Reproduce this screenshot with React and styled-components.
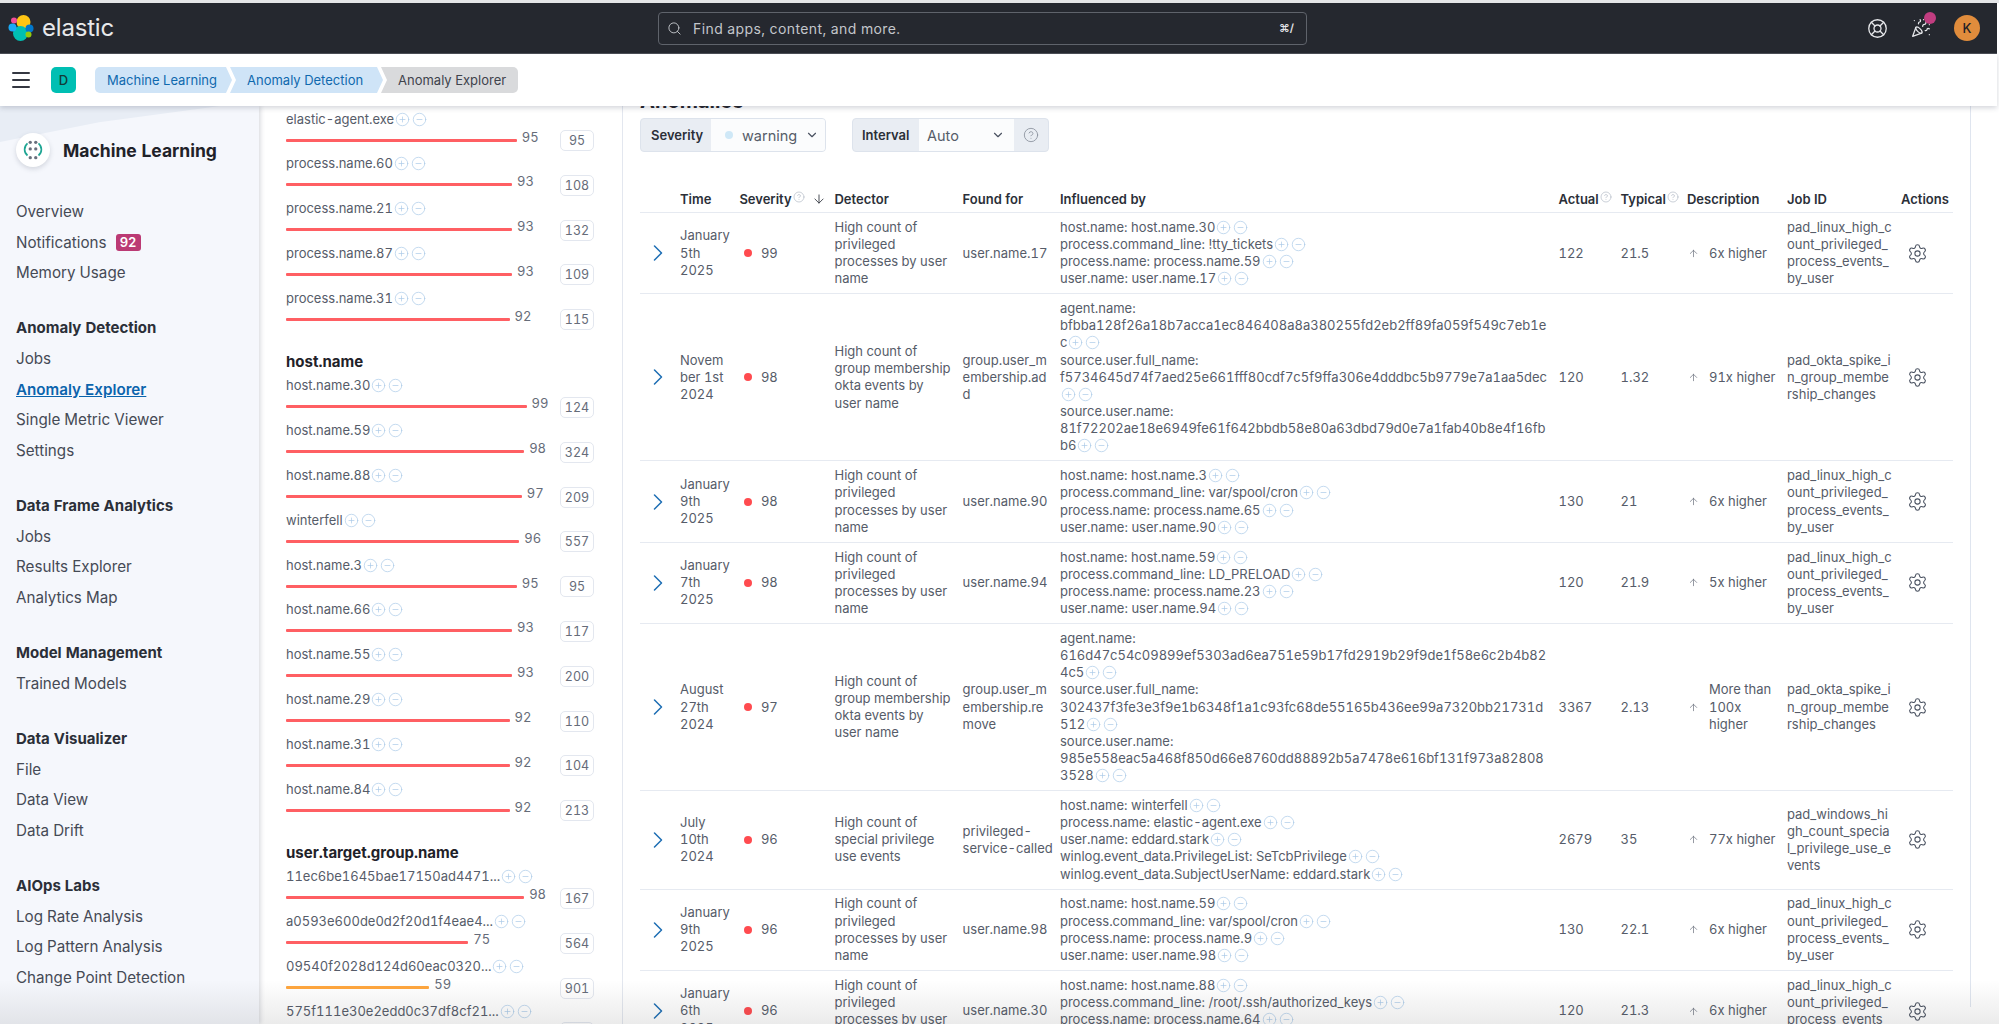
import React from 'react'
import styled, { createGlobalStyle } from 'styled-components'
import {
    ArrowDown,
    ArrowUp,
    ChevronDown,
    ChevronRight,
    CircleHelp,
    CircleMinus,
    CirclePlus,
    LifeBuoy,
    Menu,
    PartyPopper,
    Search,
    Settings,
} from 'lucide-react'

const GlobalStyle = createGlobalStyle`
    html, body {
        margin: 0;
        height: 100%;
        overflow: hidden;
        background: #fff;
    }
    * {
        box-sizing: border-box;
    }
    body {
        font-family: Inter, "Liberation Sans", sans-serif;
        font-size: 13px;
        font-variant-numeric: tabular-nums;
        color: #4a5261;
    }
`

const Page = styled.div`
    position: relative;
    height: 1024px;
    display: flex;
    flex-direction: column;
    overflow: hidden;
    border-top: 3px solid #e4e5e7;
`

const TopBar = styled.header`
    flex: 0 0 51px;
    width: 1997px;
    background: #25282f;
    border-bottom: 1px solid #4b4e55;
    display: flex;
    align-items: center;
    position: relative;
`

const Brand = styled.div`
    width: 658px;
    padding-left: 8px;
    display: flex;
    align-items: center;
    gap: 8px;
    color: #e8e9eb;
    font-size: 24px;
    line-height: 26px;
    letter-spacing: -.2px;
`

const SearchBox = styled.div`
    width: 649px;
    height: 33px;
    border: 1px solid #5f636b;
    border-radius: 4px;
    display: flex;
    align-items: center;
    padding: 0 12px 0 8px;
    color: #c3c6cb;
    font-size: 14px;
`

const SearchText = styled.span`
    margin-left: 11px;
    flex-grow: 1;
    letter-spacing: .4px;
`

const Shortcut = styled.span`
    font-size: 11px;
    font-weight: 600;
    color: #e3e4e7;
`

const TopIcons = styled.div`
    margin-left: auto;
    padding-right: 17px;
    display: flex;
    align-items: center;
    color: #e6e7ea;
`

const TopIcon = styled.span`
    position: relative;
    display: flex;
    margin-right: ${(props) => props.gap}px;
`

const AlertDot = styled.span`
    position: absolute;
    top: -6px;
    right: -5px;
    width: 12px;
    height: 12px;
    border-radius: 50%;
    background: #c13d80;
`

const Avatar = styled.span`
    width: 26px;
    height: 26px;
    border-radius: 50%;
    background: #e08c3c;
    color: #1f2126;
    font-size: 13px;
    font-weight: 500;
    display: flex;
    align-items: center;
    justify-content: center;
`

const NavBar = styled.nav`
    flex: 0 0 52px;
    width: 1997px;
    background: #fff;
    display: flex;
    align-items: center;
    padding-left: 9px;
    box-shadow: 0 2px 5px rgba(60, 70, 90, .22);
    position: relative;
    z-index: 2;
    color: #343741;
`

const SpaceBadge = styled.span`
    width: 25px;
    height: 26px;
    margin-left: 18px;
    margin-right: 19px;
    border-radius: 5px;
    background: #00bfb3;
    color: #123b38;
    font-size: 13px;
    font-weight: 500;
    display: flex;
    align-items: center;
    justify-content: center;
`

const Crumbs = styled.div`
    display: flex;
    height: 26px;
`

const Crumb = styled.span`
    width: ${(props) => props.width}px;
    margin-left: ${(props) => (props.first ? 0 : -2)}px;
    padding-left: ${(props) => (props.first ? 12 : 17)}px;
    background: ${(props) => (props.current ? '#d9dadc' : '#cfe4f7')};
    color: ${(props) => (props.current ? '#3f434c' : '#0f69ae')};
    font-size: 13px;
    line-height: 26px;
    white-space: nowrap;
    border-radius: ${(props) => (props.first ? '5px 0 0 5px' : props.current ? '0 5px 5px 0' : '0')};
    clip-path: ${(props) =>
        props.first
            ? 'polygon(0 0, calc(100% - 6px) 0, 100% 50%, calc(100% - 6px) 100%, 0 100%)'
            : props.current
            ? 'polygon(0 0, 100% 0, 100% 100%, 0 100%, 6px 50%)'
            : 'polygon(0 0, calc(100% - 6px) 0, 100% 50%, calc(100% - 6px) 100%, 0 100%, 6px 50%)'};
`

const Body = styled.div`
    flex: 1;
    min-height: 0;
    display: flex;
    overflow: hidden;
`

const Sidebar = styled.aside`
    flex: 0 0 259px;
    background: #f5f7fc;
    padding: 27px 0 0 16px;
    position: relative;
    box-shadow: 2px 0 4px rgba(70, 80, 100, .18);
    z-index: 1;

    &::before {
        content: '';
        position: absolute;
        left: 0;
        top: 0;
        width: 220px;
        height: 36px;
        background: #e8edf5;
        clip-path: polygon(0 0, 100% 0, 45% 45%, 0 100%);
    }
`

const SideTitle = styled.div`
    display: flex;
    align-items: center;
    gap: 13px;
    margin-bottom: 30px;
    color: #1f2229;
    font-size: 17.5px;
    font-weight: 700;
    position: relative;
`

const LogoCircle = styled.span`
    width: 34px;
    height: 34px;
    border-radius: 50%;
    background: #fff;
    box-shadow: 0 2px 5px rgba(70, 80, 100, .2);
    display: flex;
    align-items: center;
    justify-content: center;
`

const SideGroup = styled.div`
    margin-bottom: 23.6px;
`

const SideHeading = styled.div`
    height: 32px;
    line-height: 32px;
    color: #2b2f38;
    font-size: 15px;
    font-weight: 700;
`

const SideItem = styled.div`
    height: 30.5px;
    line-height: 30.5px;
    font-size: 15.2px;
    color: ${(props) => (props.active ? '#0b64ad' : '#454a55')};
    font-weight: ${(props) => (props.active ? 600 : 400)};
    text-decoration: ${(props) => (props.active ? 'underline' : 'none')};
    display: flex;
    align-items: center;
    gap: 9px;
`

const CountBadge = styled.span`
    width: 25px;
    height: 17px;
    border-radius: 3px;
    background: #bb3a74;
    color: #fff;
    font-size: 13px;
    font-weight: 600;
    line-height: 17px;
    text-align: center;
`

const InfluencerPanel = styled.section`
    flex: 0 0 364px;
    background: #fff;
    padding: 4.5px 0 0 27px;
    border-right: 1px solid #e3e7ef;
`

const InfluencerGroup = styled.div`
    margin-bottom: 17px;
`

const GroupTitle = styled.div`
    height: 21px;
    margin-bottom: 5px;
    line-height: 21px;
    color: #1f2229;
    font-size: 15px;
    font-weight: 700;
`

const InfluencerRow = styled.div`
    width: 308px;
    height: 44.8px;
    display: grid;
    grid-template-columns: 274px 34px;
    grid-template-rows: 17px 27.8px;
`

const InfluencerName = styled.div`
    grid-column: 1 / 3;
    line-height: 17px;
    white-space: nowrap;
    display: flex;
    align-items: center;
    color: #565c69;
`

const NameText = styled.span`
    min-width: ${(props) => (props.truncated ? 197 : 0)}px;
`

const BarLine = styled.div`
    display: flex;
    align-items: flex-start;
    gap: 5px;
`

const ScoreBar = styled.span`
    display: block;
    height: 3px;
    margin-top: 11px;
    border-radius: 1px;
    background: ${(props) => (props.score < 60 ? '#ffa63d' : '#ff5f63')};
`

const ScoreValue = styled.span`
    font-size: 13px;
    line-height: 19px;
    color: #666c79;
`

const CountBox = styled.span`
    height: 21px;
    margin-top: 2.5px;
    border: 1px solid #e3e7ef;
    border-radius: 5px;
    color: #666c79;
    font-size: 12.5px;
    line-height: 19px;
    text-align: center;
`

const FilterIcons = styled.span`
    display: inline-flex;
    vertical-align: -3px;
    gap: 2px;
    margin-left: 1px;
    color: #a9c9e8;
`

const Main = styled.main`
    flex: 1;
    min-width: 0;
    background: #fff;
    position: relative;
    padding-left: 17px;
`

const ContentColumn = styled.div`
    width: 1331px;
    height: 100%;
    padding-right: 18px;
    border-right: 1px solid #dfe5ef;
`

const SectionTitle = styled.h2`
    margin: -17px 0 5px;
    height: 24px;
    color: #1f2229;
    font-size: 20px;
    line-height: 24px;
    font-weight: 700;
`

const Controls = styled.div`
    display: flex;
    gap: 26px;
    height: 34px;
    margin-bottom: 35px;
`

const ControlGroup = styled.div`
    width: ${(props) => props.width}px;
    display: flex;
    align-items: stretch;
    background: #e9edf3;
    border: 1px solid #dde3ec;
    border-radius: 4px;
    overflow: hidden;
`

const ControlLabel = styled.span`
    width: ${(props) => props.width}px;
    padding-left: ${(props) => props.inset}px;
    color: #2b2f38;
    font-size: 13px;
    font-weight: 600;
    line-height: 32px;
`

const ControlValue = styled.span`
    flex: ${(props) => (props.grow ? 1 : `0 0 ${props.width}px`)};
    background: #fbfcfd;
    display: flex;
    align-items: center;
    padding-left: ${(props) => props.inset}px;
    color: #565c69;
    font-size: 14.5px;
`

const WarningDot = styled.span`
    width: 8px;
    height: 8px;
    margin-right: 9px;
    border-radius: 50%;
    background: #cfe8f7;
`

const ControlChevron = styled.span`
    display: flex;
    margin-left: ${(props) => props.offset}px;
    color: #4a5261;
`

const HelpCell = styled.span`
    flex: 1;
    display: flex;
    align-items: center;
    justify-content: center;
    color: #8b929e;
`

const columns = '40px 59.4px 95.1px 128.1px 97.4px 498.5px 62px 66.5px 100px 114px 52px'

const HeaderRow = styled.div`
    display: grid;
    grid-template-columns: ${columns};
    height: 26px;
    width: 1313px;
    align-items: center;
    border-bottom: 1px solid #e6eaf1;
    padding-bottom: 1px;
`

const HeaderCell = styled.span`
    grid-column: ${(props) => props.col};
    display: flex;
    align-items: center;
    gap: 1px;
    color: #2b2f38;
    font-size: 13px;
    font-weight: 600;
    white-space: nowrap;
`

const SortIcon = styled.span`
    display: flex;
    margin-left: 6px;
    color: #343741;
`

const HelpMark = styled.span`
    display: flex;
    margin-top: -4px;
    color: #a7b0bd;
`

const DataRow = styled.div`
    display: grid;
    grid-template-columns: ${columns};
    width: 1313px;
    padding: 5.85px 0;
    align-items: center;
    border-bottom: 1px solid #e6eaf1;
    line-height: 17.15px;
    color: #565c69;
`

const ExpandCell = styled.span`
    display: flex;
    padding-left: 4px;
    color: #1f6fb5;
`

const TextCell = styled.div`
    width: ${(props) => props.width}px;
    overflow-wrap: anywhere;
`

const SeverityCell = styled.div`
    display: flex;
    align-items: center;
    gap: 9px;
    padding-left: 4.5px;
`

const SeverityDot = styled.span`
    width: 8px;
    height: 8px;
    border-radius: 50%;
    background: #ff4b4f;
`

const DescriptionCell = styled.div`
    display: grid;
    grid-template-columns: 22px 68px;
    align-items: center;
`

const UpIcon = styled.span`
    display: flex;
    padding-left: 1px;
    color: #666c79;
`

const GearCell = styled.span`
    display: flex;
    padding-left: 6px;
    color: #4a5261;
`

const InfluenceLine = styled.div``

const BottomFade = styled.div`
    position: absolute;
    left: 0;
    right: 0;
    bottom: 0;
    height: 44px;
    pointer-events: none;
    z-index: 3;
    background: linear-gradient(to bottom, rgba(60, 60, 60, 0), rgba(60, 60, 60, .1));
`

const sideGroups = [
    { title: null, items: ['Overview', 'Notifications', 'Memory Usage'] },
    { title: 'Anomaly Detection', items: ['Jobs', 'Anomaly Explorer', 'Single Metric Viewer', 'Settings'] },
    { title: 'Data Frame Analytics', items: ['Jobs', 'Results Explorer', 'Analytics Map'] },
    { title: 'Model Management', items: ['Trained Models'] },
    { title: 'Data Visualizer', items: ['File', 'Data View', 'Data Drift'] },
    { title: 'AIOps Labs', items: ['Log Rate Analysis', 'Log Pattern Analysis', 'Change Point Detection'] },
]

const influencerGroups = [
    {
        title: null,
        rows: [
            ['elastic-agent.exe', 95, 95],
            ['process.name.60', 93, 108],
            ['process.name.21', 93, 132],
            ['process.name.87', 93, 109],
            ['process.name.31', 92, 115],
        ],
    },
    {
        title: 'host.name',
        rows: [
            ['host.name.30', 99, 124],
            ['host.name.59', 98, 324],
            ['host.name.88', 97, 209],
            ['winterfell', 96, 557],
            ['host.name.3', 95, 95],
            ['host.name.66', 93, 117],
            ['host.name.55', 93, 200],
            ['host.name.29', 92, 110],
            ['host.name.31', 92, 104],
            ['host.name.84', 92, 213],
        ],
    },
    {
        title: 'user.target.group.name',
        rows: [
            ['11ec6be1645bae17150ad4471...', 98, 167, true],
            ['a0593e600de0d2f20d1f4eae4...', 75, 564, true],
            ['09540f2028d124d60eac0320...', 59, 901, true],
            ['575f111e30e2edd0c37df8cf21...', 54, 320, true],
        ],
    },
]

const privileged = 'High count of privileged processes by user name'
const membership = 'High count of group membership okta events by user name'
const linuxJob = 'pad_linux_high_count_privileged_process_events_by_user'
const oktaJob = 'pad_okta_spike_in_group_membership_changes'

const anomalies = [
    {
        time: 'January 5th 2025', score: 99, detector: privileged, found: 'user.name.17',
        influences: ['host.name: host.name.30', 'process.command_line: !tty_tickets', 'process.name: process.name.59', 'user.name: user.name.17'],
        actual: '122', typical: '21.5', description: '6x higher', job: linuxJob,
    },
    {
        time: 'November 1st 2024', score: 98, detector: membership, found: 'group.user_membership.add',
        influences: [
            'agent.name: bfbba128f26a18b7acca1ec846408a8a380255fd2eb2ff89fa059f549c7eb1ec',
            'source.user.full_name: f5734645d74f7aed25e661fff80cdf7c5f9ffa306e4dddbc5b9779e7a1aa5dec',
            'source.user.name: 81f72202ae18e6949fe61f642bbdb58e80a63dbd79d0e7a1fab40b8e4f16fbb6',
        ],
        actual: '120', typical: '1.32', description: '91x higher', job: oktaJob,
    },
    {
        time: 'January 9th 2025', score: 98, detector: privileged, found: 'user.name.90',
        influences: ['host.name: host.name.3', 'process.command_line: var/spool/cron', 'process.name: process.name.65', 'user.name: user.name.90'],
        actual: '130', typical: '21', description: '6x higher', job: linuxJob,
    },
    {
        time: 'January 7th 2025', score: 98, detector: privileged, found: 'user.name.94',
        influences: ['host.name: host.name.59', 'process.command_line: LD_PRELOAD', 'process.name: process.name.23', 'user.name: user.name.94'],
        actual: '120', typical: '21.9', description: '5x higher', job: linuxJob,
    },
    {
        time: 'August 27th 2024', score: 97, detector: membership, found: 'group.user_membership.remove',
        influences: [
            'agent.name: 616d47c54c09899ef5303ad6ea751e59b17fd2919b29f9de1f58e6c2b4b824c5',
            'source.user.full_name: 302437f3fe3e3f9e1b6348f1a1c93fc68de55165b436ee99a7320bb21731d512',
            'source.user.name: 985e558eac5a468f850d66e8760dd88892b5a7478e616bf131f973a828083528',
        ],
        actual: '3367', typical: '2.13', description: 'More than 100x higher', job: oktaJob,
    },
    {
        time: 'July 10th 2024', score: 96, detector: 'High count of special privilege use events', found: 'privileged-service-called',
        influences: [
            'host.name: winterfell',
            'process.name: elastic-agent.exe',
            'user.name: eddard.stark',
            'winlog.event_data.PrivilegeList: SeTcbPrivilege',
            'winlog.event_data.SubjectUserName: eddard.stark',
        ],
        actual: '2679', typical: '35', description: '77x higher', job: 'pad_windows_high_count_specia\u200Bl_privilege_use_events',
    },
    {
        time: 'January 9th 2025', score: 96, detector: privileged, found: 'user.name.98',
        influences: ['host.name: host.name.59', 'process.command_line: var/spool/cron', 'process.name: process.name.9', 'user.name: user.name.98'],
        actual: '130', typical: '22.1', description: '6x higher', job: linuxJob,
    },
    {
        time: 'January 6th 2025', score: 96, detector: privileged, found: 'user.name.30',
        influences: ['host.name: host.name.88', 'process.command_line: /root/.ssh/authorized_keys', 'process.name: process.name.64', 'user.name: user.name.30'],
        actual: '120', typical: '21.3', description: '6x higher', job: linuxJob,
    },
]

const ElasticLogo = () => (
    <svg width="26" height="28" viewBox="0 0 26 28">
        <circle cx="15.5" cy="8" r="7" fill="#fec514" />
        <circle cx="12.5" cy="19.5" r="7.5" fill="#00bfb3" />
        <circle cx="6" cy="6.5" r="3" fill="#f04e98" />
        <circle cx="4.5" cy="13.5" r="4" fill="#1ba9f5" />
        <circle cx="21.5" cy="14.5" r="4" fill="#0077cc" />
        <circle cx="20.5" cy="20.5" r="3" fill="#93c90e" />
    </svg>
)

const MachineLearningLogo = () => (
    <svg width="22" height="22" viewBox="0 0 20 20" fill="none">
        <path d="M5 4 C1.5 7 1.5 12 5 15" stroke="#1ea593" strokeWidth="1.5" />
        <path d="M15 4 C18.5 7 18.5 12 15 15" stroke="#1ea593" strokeWidth="1.5" />
        {[[7.5, 3], [12.5, 3], [7.5, 9], [12.5, 9], [7.5, 17], [12.5, 17]].map(([x, y]) => (
            <circle key={`${x}-${y}`} cx={x} cy={y} r="1.5" fill="#69707d" />
        ))}
    </svg>
)

const FilterButtons = () => (
    <FilterIcons>
        <CirclePlus size={15} strokeWidth={1.1} />
        <CircleMinus size={15} strokeWidth={1.1} />
    </FilterIcons>
)

const Help = () => (
    <HelpMark>
        <CircleHelp size={12} strokeWidth={1.2} />
    </HelpMark>
)

const App = () => {
    return (
        <Page>
            <GlobalStyle />
            <TopBar>
                <Brand>
                    <ElasticLogo />
                    elastic
                </Brand>
                <SearchBox>
                    <Search size={15} strokeWidth={1.5} />
                    <SearchText>Find apps, content, and more.</SearchText>
                    <Shortcut>⌘/</Shortcut>
                </SearchBox>
                <TopIcons>
                    <TopIcon gap={23}><LifeBuoy size={21} strokeWidth={1.5} /></TopIcon>
                    <TopIcon gap={23}>
                        <PartyPopper size={20} strokeWidth={1.5} />
                        <AlertDot />
                    </TopIcon>
                    <Avatar>K</Avatar>
                </TopIcons>
            </TopBar>
            <NavBar>
                <Menu size={24} strokeWidth={2} />
                <SpaceBadge>D</SpaceBadge>
                <Crumbs>
                    <Crumb first width={137}>Machine Learning</Crumb>
                    <Crumb width={153}>Anomaly Detection</Crumb>
                    <Crumb current width={137}>Anomaly Explorer</Crumb>
                </Crumbs>
            </NavBar>
            <Body>
                <Sidebar>
                    <SideTitle>
                        <LogoCircle><MachineLearningLogo /></LogoCircle>
                        Machine Learning
                    </SideTitle>
                    {sideGroups.map((group) => (
                        <SideGroup key={group.items[0] + group.items.length}>
                            {group.title && <SideHeading>{group.title}</SideHeading>}
                            {group.items.map((item) => (
                                <SideItem key={item} active={item === 'Anomaly Explorer'}>
                                    {item}
                                    {item === 'Notifications' && <CountBadge>92</CountBadge>}
                                </SideItem>
                            ))}
                        </SideGroup>
                    ))}
                </Sidebar>
                <InfluencerPanel>
                    {influencerGroups.map((group) => (
                        <InfluencerGroup key={group.rows[0][0]}>
                            {group.title && <GroupTitle>{group.title}</GroupTitle>}
                            {group.rows.map(([name, score, count, truncated]) => (
                                <InfluencerRow key={name}>
                                    <InfluencerName>
                                        <NameText truncated={truncated}>{name}</NameText>
                                        <FilterButtons />
                                    </InfluencerName>
                                    <BarLine>
                                        <ScoreBar score={score} style={{ width: score * 2.43 }} />
                                        <ScoreValue>{score}</ScoreValue>
                                    </BarLine>
                                    <CountBox>{count}</CountBox>
                                </InfluencerRow>
                            ))}
                        </InfluencerGroup>
                    ))}
                </InfluencerPanel>
                <Main>
                    <ContentColumn>
                        <SectionTitle>Anomalies</SectionTitle>
                        <Controls>
                            <ControlGroup width={186}>
                                <ControlLabel width={70} inset={10}>Severity</ControlLabel>
                                <ControlValue grow inset={14}>
                                    <WarningDot />
                                    warning
                                    <ControlChevron offset={8}><ChevronDown size={14} /></ControlChevron>
                                </ControlValue>
                            </ControlGroup>
                            <ControlGroup width={197}>
                                <ControlLabel width={66} inset={9}>Interval</ControlLabel>
                                <ControlValue width={95} inset={8}>
                                    Auto
                                    <ControlChevron offset={32}><ChevronDown size={14} /></ControlChevron>
                                </ControlValue>
                                <HelpCell><CircleHelp size={16} strokeWidth={1.3} /></HelpCell>
                            </ControlGroup>
                        </Controls>
                        <HeaderRow>
                            <HeaderCell col={2}>Time</HeaderCell>
                            <HeaderCell col={3}>
                                Severity
                                <Help />
                                <SortIcon><ArrowDown size={14} strokeWidth={1.5} /></SortIcon>
                            </HeaderCell>
                            <HeaderCell col={4}>Detector</HeaderCell>
                            <HeaderCell col={5}>Found for</HeaderCell>
                            <HeaderCell col={6}>Influenced by</HeaderCell>
                            <HeaderCell col={7}>Actual<Help /></HeaderCell>
                            <HeaderCell col={8}>Typical<Help /></HeaderCell>
                            <HeaderCell col={9}>Description</HeaderCell>
                            <HeaderCell col={10}>Job ID</HeaderCell>
                            <HeaderCell col={11}>Actions</HeaderCell>
                        </HeaderRow>
                        {anomalies.map((row) => (
                            <DataRow key={row.time + row.found}>
                                <ExpandCell><ChevronRight size={28} strokeWidth={1.3} /></ExpandCell>
                                <TextCell width={51}>{row.time}</TextCell>
                                <SeverityCell>
                                    <SeverityDot />
                                    {row.score}
                                </SeverityCell>
                                <TextCell width={118}>{row.detector}</TextCell>
                                <TextCell width={91}>{row.found}</TextCell>
                                <TextCell width={490}>
                                    {row.influences.map((line) => (
                                        <InfluenceLine key={line}>
                                            {line}
                                            <FilterButtons />
                                        </InfluenceLine>
                                    ))}
                                </TextCell>
                                <TextCell width={60}>{row.actual}</TextCell>
                                <TextCell width={60}>{row.typical}</TextCell>
                                <DescriptionCell>
                                    <UpIcon><ArrowUp size={11} strokeWidth={1.5} /></UpIcon>
                                    {row.description}
                                </DescriptionCell>
                                <TextCell width={105.8}>{row.job}</TextCell>
                                <GearCell><Settings size={21} strokeWidth={1.2} /></GearCell>
                            </DataRow>
                        ))}
                    </ContentColumn>
                </Main>
            </Body>
            <BottomFade />
        </Page>
    )
}

export default App
